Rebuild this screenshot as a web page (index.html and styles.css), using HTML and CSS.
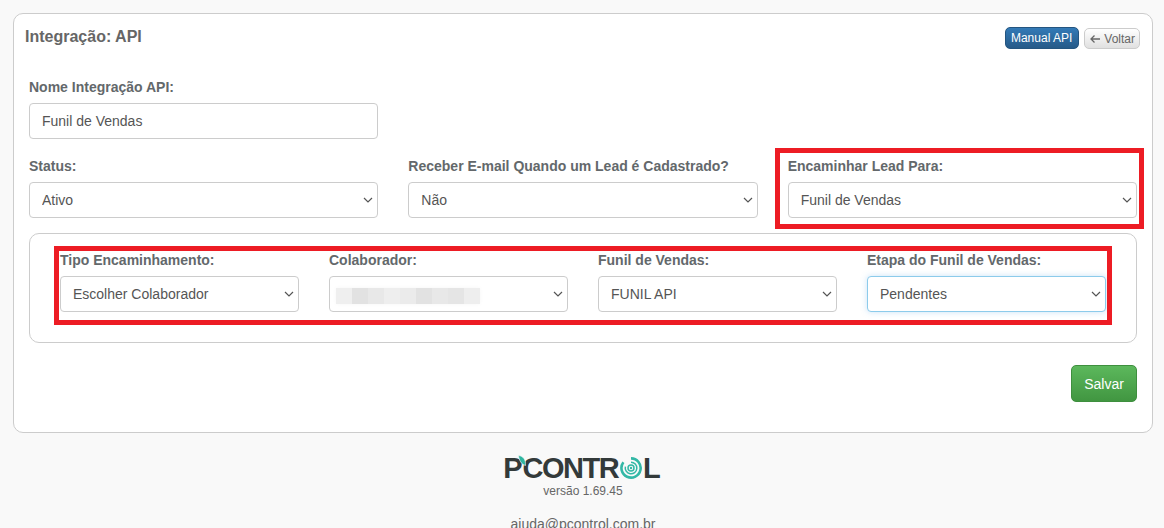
FILE: index.html
```html
<!DOCTYPE html>
<html lang="pt-BR">
<head>
    <meta charset="UTF-8">
    <meta name="viewport" content="width=device-width, initial-scale=1.0">
    <title>Integração: API</title>
    <link rel="stylesheet" href="styles.css">
</head>
<body>
    <div class="card">
        <div class="card-header">
            <h3 class="card-title">Integração: API</h3>
            <div class="header-actions">
                <button type="button" class="btn btn-blue">Manual API</button>
                <button type="button" class="btn btn-light">
                    <svg class="arrow-icon" viewBox="0 0 12 12" width="12" height="12"><path d="M11 6H2M5.5 2.5 2 6l3.5 3.5" fill="none" stroke="currentColor" stroke-width="1.3"/></svg>
                    Voltar
                </button>
            </div>
        </div>

        <form class="api-form">
            <div class="row row-name">
                <div class="field">
                    <label for="nome">Nome Integração API:</label>
                    <input type="text" id="nome" value="Funil de Vendas">
                </div>
            </div>
            <div class="row">
                <div class="field">
                    <label for="status">Status:</label>
                    <select id="status"><option>Ativo</option></select>
                </div>
                <div class="field">
                    <label for="email">Receber E-mail Quando um Lead é Cadastrado?</label>
                    <select id="email"><option>Não</option></select>
                </div>
                <div class="field">
                    <label for="encaminhar">Encaminhar Lead Para:</label>
                    <select id="encaminhar"><option>Funil de Vendas</option></select>
                </div>
            </div>

            <div class="sub-box">
                <div class="field">
                    <label for="tipo">Tipo Encaminhamento:</label>
                    <select id="tipo"><option>Escolher Colaborador</option></select>
                </div>
                <div class="field">
                    <label for="colab">Colaborador:</label>
                    <div class="select-wrap">
                        <select id="colab"><option></option></select>
                        <span class="blurred-name"></span>
                    </div>
                </div>
                <div class="field">
                    <label for="funil">Funil de Vendas:</label>
                    <select id="funil"><option>FUNIL API</option></select>
                </div>
                <div class="field">
                    <label for="etapa">Etapa do Funil de Vendas:</label>
                    <select id="etapa" class="is-focus"><option>Pendentes</option></select>
                </div>
            </div>

            <div class="form-actions">
                <button type="button" class="btn-save">Salvar</button>
            </div>
        </form>

        <div class="red-mark mark-lead"></div>
        <div class="red-mark mark-tipo"></div>
    </div>

    <footer class="footer">
        <div class="logo">
            <span class="logo-p">P<svg class="logo-leaf" viewBox="0 0 8 11" width="8" height="11"><path d="M0.5 0.5C5 1 8 4.5 7.5 10.5C3.5 9.5 1 5.5 0.5 0.5Z" fill="#2fb5a0" stroke="#f9f9f9" stroke-width="0.6"/></svg></span><span class="logo-text">CONTR</span><svg class="logo-o" viewBox="0 0 22 22" width="22" height="22">
                <g fill="none" stroke="#33b8a6">
                    <path d="M11 1.4A9.6 9.6 0 1 1 3.4 5.2" stroke-width="2.6"/>
                    <path d="M11 5.2A5.8 5.8 0 1 1 5.4 9.6" stroke-width="1.5"/>
                    <circle cx="11" cy="11" r="3" stroke-width="1.5"/>
                </g>
                <circle cx="11" cy="11" r="1.2" fill="#33b8a6"/>
            </svg><span class="logo-l">L</span>
        </div>
        <div class="version">versão 1.69.45</div>
        <div class="help">ajuda@pcontrol.com.br</div>
    </footer>
</body>
</html>
```

FILE: styles.css
```css
html {
    overflow: hidden;
}
body {
    font-family: "Liberation Sans", Arial, sans-serif;
    font-size: 14px;
    color: #555;
    background-color: #f9f9f9;
    margin: 0;
    padding: 13px 11px 0 13px;
}
.card {
    position: relative;
    background: #fff;
    border: 1px solid #ccc;
    border-radius: 10px;
    height: 418px;
    padding: 0 15px;
}
.card-header {
    display: flex;
    justify-content: space-between;
    margin: 0 -3px;
    padding-top: 13px;
    height: 63px;
    box-sizing: border-box;
}
.card-title {
    margin: 1px 0 0 -1px;
    font-size: 16px;
    line-height: 18px;
    font-weight: bold;
    color: #666;
}
.header-actions {
    display: flex;
    gap: 5px;
    align-items: flex-start;
}
.btn {
    height: 22px;
    font-family: inherit;
    font-size: 12px;
    border-radius: 5px;
    padding: 0 5px;
    display: flex;
    align-items: center;
}
.btn-blue {
    color: #fff;
    background: linear-gradient(#337ab7, #265a88);
    border: 1px solid #245580;
    padding-right: 6px;
}
.btn-light {
    color: #666;
    background: linear-gradient(#fff, #e0e0e0);
    border: 1px solid #ccc;
    margin-top: 1px;
    height: 21px;
    padding: 0 4px;
    gap: 3px;
}
.row {
    display: flex;
    gap: 30px;
    margin-bottom: 15px;
}
.row-name {
    margin-bottom: 17px;
}
.row-name .field {
    flex: 0 0 349px;
}
.field {
    flex: 1;
    min-width: 0;
}
label {
    display: block;
    font-weight: bold;
    color: #63686b;
    line-height: 20px;
    margin-bottom: 6px;
}
input, select {
    display: block;
    width: 100%;
    height: 36px;
    box-sizing: border-box;
    padding: 6px 12px;
    font-family: inherit;
    font-size: 14px;
    color: #555;
    background-color: #fff;
    border: 1px solid #ccc;
    border-radius: 4px;
    outline: none;
}
select {
    appearance: none;
    padding-right: 20px;
    background-image: url("data:image/svg+xml,%3Csvg xmlns='http://www.w3.org/2000/svg' width='10' height='6'%3E%3Cpath d='M1 1l4 4 4-4' fill='none' stroke='%23555' stroke-width='1.2'/%3E%3C/svg%3E");
    background-repeat: no-repeat;
    background-position: right 4px center;
}
select.is-focus {
    border-color: #8ccbeb;
    box-shadow: 0 0 6px rgba(102, 175, 233, 0.35);
}
.sub-box {
    display: flex;
    gap: 30px;
    height: 110px;
    box-sizing: border-box;
    padding: 16px 30px 0 30px;
    border: 1px solid #ccc;
    border-radius: 10px;
}
.sub-box .field {
    width: 239px;
    flex: 0 0 auto;
}
.select-wrap {
    position: relative;
}
.blurred-name {
    position: absolute;
    left: 7px;
    top: 12px;
    width: 144px;
    height: 16px;
    box-shadow: 0 0 4px #f6f6f6;
    background: linear-gradient(90deg,
        #efefef 0 16px, #e2e2e2 16px 32px, #e8e8e8 32px 48px,
        #eeeeee 48px 64px, #ebebeb 64px 80px, #e2e2e2 80px 96px,
        #e8e8e8 96px 112px, #e5e5e5 112px 128px, #eeeeee 128px 144px);
}
.form-actions {
    display: flex;
    justify-content: flex-end;
    margin-top: 22px;
}
.btn-save {
    width: 66px;
    height: 37px;
    font-family: inherit;
    font-size: 14px;
    color: #fff;
    background: linear-gradient(#5cb85c, #419641);
    border: 1px solid #3e8f3e;
    border-radius: 5px;
}
.red-mark {
    position: absolute;
    border: 5px solid #ed1c24;
    box-sizing: border-box;
}
.mark-lead {
    left: 761px;
    top: 134px;
    width: 369px;
    height: 81px;
}
.mark-tipo {
    left: 40px;
    top: 232px;
    width: 1058px;
    height: 79px;
}
.footer {
    text-align: center;
    padding-top: 21px;
}
.logo {
    display: flex;
    justify-content: center;
    align-items: center;
    height: 28px;
    font-size: 29px;
    font-weight: bold;
    color: #333a3a;
    line-height: 28px;
    padding-right: 2px;
}
.logo-p {
    position: relative;
}
.logo-leaf {
    position: absolute;
    top: 1px;
    right: -3px;
}
.logo-text {
    letter-spacing: -1.5px;
}
.logo-o {
    margin: 0 0 0 2px;
}
.logo-l {
    margin-left: 1px;
}
.version {
    font-size: 12px;
    line-height: 14px;
    color: #666;
    margin-top: 2px;
}
.help {
    color: #666;
    margin-top: 16px;
    line-height: 20px;
}
```
